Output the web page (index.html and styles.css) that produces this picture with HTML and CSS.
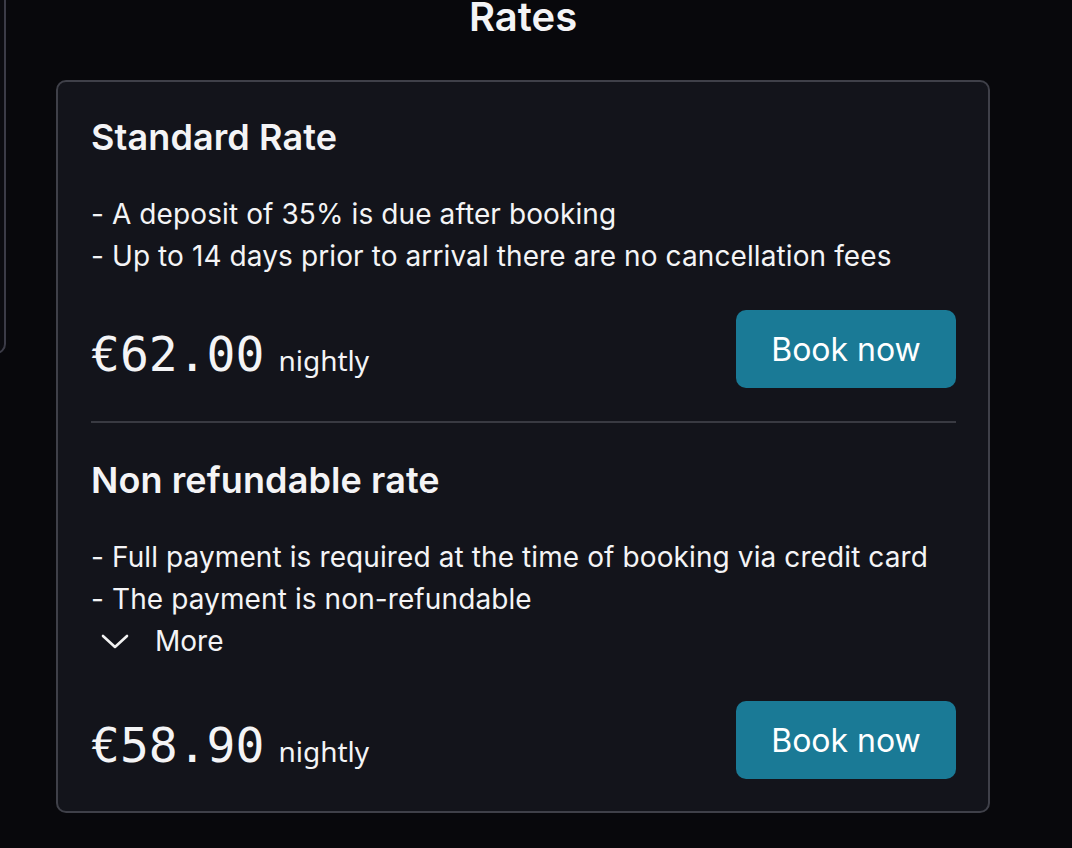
FILE: index.html
```html
<!DOCTYPE html>
<html>
<head>
    <link rel="stylesheet" href="styles.css">
    <title>Rates</title>
</head>
<body>
    <div class="page">
        <div class="side-panel"></div>
        <main class="rates">
            <h1 class="rates-title">Rates</h1>
            <div class="rates-card">
                <section class="rate">
                    <h2 class="rate-name">Standard Rate</h2>
                    <div class="rate-terms">
                        <p>- A deposit of 35% is due after booking</p>
                        <p>- Up to 14 days prior to arrival there are no cancellation fees</p>
                    </div>
                    <div class="rate-footer">
                        <div class="price"><span class="amount">€62.00</span> <span class="per">nightly</span></div>
                        <button class="book-btn">Book now</button>
                    </div>
                </section>
                <hr class="divider">
                <section class="rate">
                    <h2 class="rate-name">Non refundable rate</h2>
                    <div class="rate-terms">
                        <p>- Full payment is required at the time of booking via credit card</p>
                        <p>- The payment is non-refundable</p>
                        <button class="more-btn">
                            <svg width="28" height="20" viewBox="0 0 28 20"><path d="M2 5 L14 16 L26 5" fill="none" stroke="#f2f2f2" stroke-width="2.6" stroke-linecap="round" stroke-linejoin="round"/></svg>
                            <span>More</span>
                        </button>
                    </div>
                    <div class="rate-footer">
                        <div class="price"><span class="amount">€58.90</span> <span class="per">nightly</span></div>
                        <button class="book-btn">Book now</button>
                    </div>
                </section>
            </div>
        </main>
    </div>
</body>
</html>
```

FILE: styles.css
```css
html, body {
    margin: 0;
    background: #08080c;
    color: #f4f4f6;
    font-family: Inter, "Noto Sans", sans-serif;
}
.page {
    display: flex;
    align-items: flex-start;
    overflow: hidden;
    height: 848px;
}
.side-panel {
    flex: none;
    width: 406px;
    height: 374px;
    margin-left: -400px;
    margin-top: -20px;
    box-sizing: border-box;
    border: 2px solid #3b3b47;
    border-radius: 10px;
    background: #0b0b10;
}
.rates {
    flex: none;
    width: 934px;
    margin-left: 50px;
}
.rates-title {
    margin: -5px 0 0;
    font-size: 40px;
    line-height: 44px;
    font-weight: 600;
    text-align: center;
}
.rates-card {
    margin-top: 41px;
    background: #13141b;
    border: 2px solid #3f4049;
    border-radius: 10px;
    padding: 35px 32px 32px 33px;
}
.rate-name {
    margin: 0;
    font-size: 36px;
    line-height: 40px;
    font-weight: 600;
    letter-spacing: 0.1px;
}
.rate-terms {
    margin-top: 36px;
    font-size: 28px;
    line-height: 42px;
    letter-spacing: 0.1px;
}
.rate-terms p {
    margin: 0;
}
.more-btn {
    display: flex;
    align-items: center;
    gap: 26px;
    padding: 0 0 0 10px;
    height: 42px;
    background: none;
    border: none;
    color: #f4f4f6;
    font: inherit;
}
.rate-footer {
    display: flex;
    align-items: center;
    justify-content: space-between;
    margin-top: 33px;
}
.rate + .divider + .rate .rate-footer {
    margin-top: 39px;
}
.price {
    display: flex;
    align-items: baseline;
    gap: 14px;
    padding-top: 10px;
}
.amount {
    font-family: "DejaVu Sans Mono", monospace;
    font-size: 48px;
}
.per {
    font-family: "Noto Sans", sans-serif;
    font-size: 28px;
}
.book-btn {
    width: 220px;
    height: 78px;
    background: #1a7a96;
    border: none;
    border-radius: 10px;
    color: #ffffff;
    font-family: Inter, sans-serif;
    font-size: 32px;
}
.divider {
    margin: 33px 0 37px;
    border: none;
    height: 2px;
    background: #393a42;
}
```
